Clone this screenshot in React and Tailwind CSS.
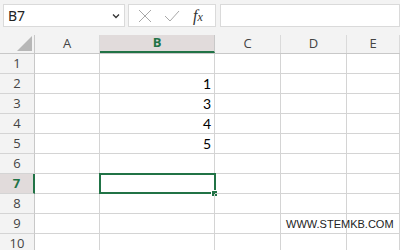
import React from "react";

const cols = [
  { name: "A", w: "w-[65px]" },
  { name: "B", w: "w-[115px]" },
  { name: "C", w: "w-[66px]" },
  { name: "D", w: "w-[66px]" },
  { name: "E", w: "flex-1" },
];

const data = { 2: "1", 3: "3", 4: "4", 5: "5" };

export default function App() {
  const rows = [1, 2, 3, 4, 5, 6, 7, 8, 9, 10];

  return (
    <div className="w-[400px] h-[250px] overflow-hidden bg-white font-['Open_Sans',sans-serif] select-none">
      {/* formula bar */}
      <div className="h-[35px] bg-[#f3f3f3] flex items-start pt-[4px] pl-[3px] gap-[3px]">
        <div className="w-[122px] h-[23px] bg-white border border-[#dadada] flex items-center justify-between pl-[4px] pr-[4px]">
          <span className="text-[14px] text-[#222] font-['Noto_Sans',sans-serif]">B7</span>
          <svg width="8" height="6" viewBox="0 0 8 6">
            <path d="M1 1.5 L4 4.5 L7 1.5" stroke="#333" strokeWidth="1.3" fill="none" />
          </svg>
        </div>
        <div className="w-[88px] h-[23px] bg-white border border-[#dadada] flex items-center pl-[9px] gap-[12px]">
          <svg width="14" height="14" viewBox="0 0 14 14">
            <path d="M1 1 L13 13 M13 1 L1 13" stroke="#a8a8a8" strokeWidth="1" fill="none" />
          </svg>
          <svg width="16" height="14" viewBox="0 0 16 14">
            <path d="M1 7 L6 12 L15 2" stroke="#a8a8a8" strokeWidth="1" fill="none" />
          </svg>
          <span className="text-[16px] italic text-[#333] font-['Liberation_Serif',serif] ml-[1px] leading-none">
            f<span className="text-[12px]">x</span>
          </span>
        </div>
        <div className="flex-1 h-[23px] bg-white border border-[#dadada] ml-[1px]"></div>
      </div>

      {/* column headers */}
      <div className="flex h-[19px] bg-[#f3f3f3] border-b border-[#c8c8c8]">
        <div className="w-[35px] border-r border-[#c8c8c8] relative">
          <div className="absolute right-[2px] bottom-[2px] w-0 h-0 border-l-[15px] border-l-transparent border-b-[15px] border-b-[#b7b7b7]"></div>
        </div>
        {cols.map((c) =>
          c.name === "B" ? (
            <div
              key={c.name}
              className={`${c.w} bg-[#e1dbdb] border-r border-[#c8c8c8] border-b-2 border-b-[#217346] flex items-center justify-center text-[13px] font-bold text-[#217346]`}
            >
              {c.name}
            </div>
          ) : (
            <div
              key={c.name}
              className={`${c.w} border-r border-[#dadada] flex items-center justify-center text-[13px] text-[#444]`}
            >
              {c.name}
            </div>
          )
        )}
      </div>

      {/* grid rows */}
      {rows.map((r) => (
        <div key={r} className="flex h-[20px]">
          {r === 7 ? (
            <div className="w-[35px] bg-[#e1dbdb] border-r-2 border-[#217346] border-b border-b-[#d4d4d4] flex items-center justify-center text-[13px] font-bold text-[#217346]">
              {r}
            </div>
          ) : (
            <div className="w-[35px] bg-[#f3f3f3] border-r border-[#c8c8c8] border-b border-b-[#d4d4d4] flex items-center justify-center text-[13px] text-[#444]">
              {r}
            </div>
          )}
          {cols.map((c) => (
            <div
              key={c.name}
              className={`${c.w} border-r border-b border-[#d4d4d4] relative flex items-center justify-end pr-[3px] text-[14px] text-black font-['Lato',sans-serif]`}
            >
              {c.name === "B" && data[r]}
              {c.name === "B" && r === 7 && (
                <>
                  <div className="absolute left-[-1px] top-[-1px] right-[-2px] bottom-[-1px] border-2 border-[#217346]"></div>
                  <div className="absolute right-[-4px] bottom-[-4px] w-[5px] h-[5px] bg-[#217346] border border-white box-content"></div>
                </>
              )}
              {c.name === "D" && r === 9 && (
                <span className="absolute left-[5px] top-[2px] whitespace-nowrap text-[11px] text-[#222] font-['Liberation_Sans',sans-serif]">
                  WWW.STEMKB.COM
                </span>
              )}
            </div>
          ))}
        </div>
      ))}
    </div>
  );
}
